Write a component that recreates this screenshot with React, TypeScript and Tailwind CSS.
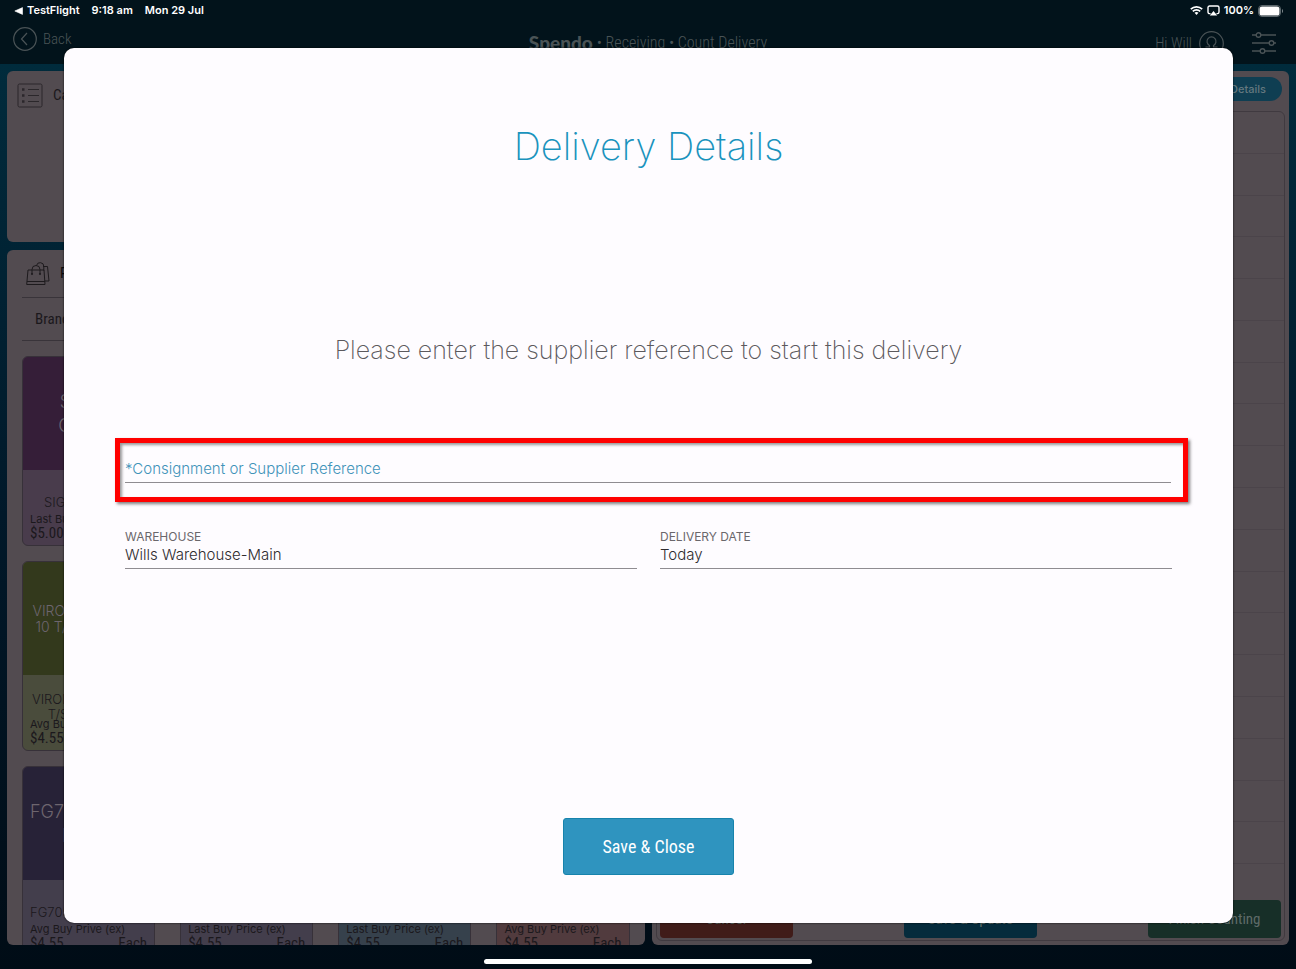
import type { ReactNode } from 'react';

const narrow = "font-['Liberation_Sans_Narrow','Roboto_Condensed','Liberation_Sans',sans-serif]";

type Tile = {
  title: string[];
  titleSize: string;
  name: string[];
  priceLabel: string;
  price: string;
  head: string;
  foot: string;
};

const tiles: Tile[] = [
  { title: ['SIGMA', 'COVER'], titleSize: 'text-lg leading-6', name: ['SIGMA COVER'], priceLabel: 'Last Buy Price (ex)', price: '$5.00', head: 'bg-[#351e38]', foot: 'bg-[#493c4c]' },
  { title: [], titleSize: '', name: [], priceLabel: 'Last Buy Price (ex)', price: '$4.55', head: 'bg-[#2a2338]', foot: 'bg-[#433e4c]' },
  { title: [], titleSize: '', name: [], priceLabel: 'Last Buy Price (ex)', price: '$4.55', head: 'bg-[#1d3442]', foot: 'bg-[#36414c]' },
  { title: [], titleSize: '', name: [], priceLabel: 'Avg Buy Prive (ex)', price: '$4.55', head: 'bg-[#4f2420]', foot: 'bg-[#513b3e]' },
  { title: ['VIRON TESTER S', '10 T/SHEETS XL'], titleSize: 'text-sm leading-4', name: ['VIRON TEST PK 10', 'T/SHEETS XL'], priceLabel: 'Avg Buy Prive (ex)', price: '$4.55', head: 'bg-[#33391c]', foot: 'bg-[#4a4c3c]' },
  { title: [], titleSize: '', name: [], priceLabel: 'Last Buy Price (ex)', price: '$4.55', head: 'bg-[#2a2338]', foot: 'bg-[#433e4c]' },
  { title: [], titleSize: '', name: [], priceLabel: 'Last Buy Price (ex)', price: '$4.55', head: 'bg-[#1d3442]', foot: 'bg-[#36414c]' },
  { title: [], titleSize: '', name: [], priceLabel: 'Avg Buy Prive (ex)', price: '$4.55', head: 'bg-[#4f2420]', foot: 'bg-[#513b3e]' },
  { title: ['FG70517-ABC', 'LINEN'], titleSize: 'text-lg leading-6', name: ['FG70517-AB LINEN'], priceLabel: 'Avg Buy Prive (ex)', price: '$4.55', head: 'bg-[#272237]', foot: 'bg-[#433e4c]' },
  { title: [], titleSize: '', name: [], priceLabel: 'Last Buy Price (ex)', price: '$4.55', head: 'bg-[#2a2338]', foot: 'bg-[#433e4c]' },
  { title: [], titleSize: '', name: [], priceLabel: 'Last Buy Price (ex)', price: '$4.55', head: 'bg-[#1d3442]', foot: 'bg-[#36414c]' },
  { title: [], titleSize: '', name: [], priceLabel: 'Avg Buy Prive (ex)', price: '$4.55', head: 'bg-[#4f2420]', foot: 'bg-[#513b3e]' },
];

const StatusBar = () => (
  <div className="flex h-[22px] items-center justify-between pb-px pl-[14px] pr-3 text-[11px] font-semibold text-white">
    <div className="flex items-center gap-3">
      <a href="#" className="flex items-center gap-1">
        <svg width="9" height="8" viewBox="0 0 9 8" fill="currentColor">
          <path d="M8.5.6v6.8L.8 4z" stroke="currentColor" strokeWidth=".6" strokeLinejoin="round" />
        </svg>
        TestFlight
      </a>
      <span>9:18 am</span>
      <span>Mon 29 Jul</span>
    </div>
    <div className="flex items-center gap-1">
      <svg width="13" height="11" viewBox="0 0 13 11" fill="none" stroke="currentColor" strokeWidth="1.7">
        <path d="M.8 4.1a8.2 8.2 0 0 1 11.4 0" />
        <path d="M2.8 6.3a5.3 5.3 0 0 1 7.4 0" />
        <path d="M4.5 7.8a3 3 0 0 1 4 0L6.5 10z" fill="currentColor" stroke="none" />
      </svg>
      <svg width="13" height="11" viewBox="0 0 13 11" fill="none">
        <path d="M3.5 8.6h-.9A1.6 1.6 0 0 1 1 7V2.6A1.6 1.6 0 0 1 2.6 1h7.8A1.6 1.6 0 0 1 12 2.6V7a1.6 1.6 0 0 1-1.6 1.6h-.9" stroke="currentColor" strokeWidth="1.4" />
        <path d="M6.5 6l3.7 4.500H2.8z" fill="currentColor" />
      </svg>
      <span>100%</span>
      <svg width="26" height="12" viewBox="0 0 26 12">
        <rect x=".5" y=".5" width="22" height="11" rx="3.5" fill="none" stroke="#5b676c" />
        <rect x="1.500" y="1.500" width="20" height="9" rx="2.600" fill="#fff" />
        <path d="M24 4v4c1.4-.6 1.4-3.4 0-4z" fill="#7f898d" />
      </svg>
    </div>
  </div>
);

const AppHeader = () => (
  <header className={`grid h-[42px] grid-cols-[1fr_auto_1fr] items-center px-[13px] text-[15px] font-light text-[#4a5356] ${narrow}`}>
    <button type="button" className="flex items-center gap-[6px] justify-self-start pb-2">
      <svg width="24" height="24" viewBox="0 0 24 24" fill="none" stroke="currentColor" strokeWidth="1.2">
        <circle cx="12" cy="12" r="11.3" />
        <path d="M14 6l-5.5 6 5.5 6" />
      </svg>
      Back
    </button>
    <h1 className="flex items-center gap-1">
      <span className="font-['Lato',sans-serif] text-[19px] font-black">Spendo</span>
      <span className="text-[16px]">• Receiving • Count Delivery</span>
    </h1>
    <div className="flex items-center justify-self-end pr-[7px]">
      <span>Hi Will</span>
      <svg className="ml-[7px]" width="25" height="25" viewBox="0 0 25 25" fill="none" stroke="currentColor" strokeWidth="1.2">
        <circle cx="12.5" cy="12.5" r="11.8" />
        <path d="M6.500 16h4v-1.500a4.500 4.500 0 1 1 4 0V16h4" />
      </svg>
      <button type="button" aria-label="Filters" className="ml-7">
        <svg width="24" height="22" viewBox="0 0 24 22" fill="none" stroke="currentColor" strokeWidth="1.4">
          <path d="M0 3h4M9 3h15M0 11h17M22 11h2M0 19h8M13 19h11" />
          <circle cx="6.5" cy="3" r="2.3" />
          <circle cx="19.5" cy="11" r="2.3" />
          <circle cx="10.5" cy="19" r="2.3" />
        </svg>
      </button>
    </div>
  </header>
);

const ListIcon = () => (
  <svg width="26" height="25" viewBox="0 0 26 25" fill="none" stroke="#2b272b" strokeWidth="1">
    <rect x="1" y="1" width="24" height="23" rx="1.5" />
    <path d="M11 6.500h11M11 12.500h11M11 18.500h11" />
    <path d="M5 6.500h2.500M5 12.500h2.500M5 18.500h2.500" strokeWidth="2.500" />
  </svg>
);

const BagsIcon = () => (
  <svg width="24" height="25" viewBox="0 0 24 25" fill="none" stroke="#1d1a1d" strokeWidth="1">
    <path d="M2 9h16l1 14.500H.7zM1 20.500h18" />
    <path d="M6 13V8.500a4 4 0 0 1 8 0V13" />
    <path d="M10.500 4.500a3.700 3.700 0 0 1 7.300 1v4M17 5.500h4.500L23 20h-4" />
    <circle cx="6" cy="13" r=".7" />
    <circle cx="14" cy="13" r=".7" />
  </svg>
);

const ProductTile = ({ tile }: { tile: Tile }) => (
  <div className={`flex h-[190px] flex-col overflow-hidden rounded-md border border-[#373139] ${tile.foot}`}>
    <div className={`flex h-[113px] shrink-0 flex-col items-center justify-center whitespace-nowrap font-light text-[#6d656e] ${tile.titleSize} ${tile.head}`}>
      {tile.title.map((line) => <span key={line}>{line}</span>)}
    </div>
    <div className="flex grow flex-col justify-end pb-1 text-[#1b181c]">
      <div className="flex h-[22px] flex-col items-center justify-center text-[13px] font-light leading-[15px]">
        {tile.name.map((line) => <span key={line} className="whitespace-nowrap">{line}</span>)}
      </div>
      <div className="px-[7px]">
        <div className="text-[11px] leading-3">{tile.priceLabel}</div>
        <div className={`flex justify-between text-[15px] leading-4 ${narrow}`}>
          <span>{tile.price}</span>
          <span>Each</span>
        </div>
      </div>
    </div>
  </div>
);

const LeftColumn = () => (
  <div className="flex min-h-0 flex-col gap-2">
    <section className="h-[171px] shrink-0 rounded-md bg-[#524b50] px-[10px] py-3">
      <h2 className={`flex items-center gap-[10px] text-[15px] text-[#1b181c] ${narrow}`}>
        <ListIcon />
        Cart
      </h2>
    </section>
    <section className="min-h-0 flex-1 overflow-hidden rounded-md bg-[#524b50] px-[15px]">
      <h2 className={`flex h-12 items-center gap-[10px] border-b border-[#39343a] pl-1 text-[15px] text-[#0c0a0c] ${narrow}`}>
        <BagsIcon />
        Products
      </h2>
      <div className={`flex h-[43px] items-center border-b border-[#39343a] pl-[13px] text-[15px] text-[#1b181c] ${narrow}`}>Brands</div>
      <div className="grid grid-cols-4 gap-x-[25px] gap-y-[15px] pt-[15px]">
        {tiles.map((tile, i) => <ProductTile key={i} tile={tile} />)}
      </div>
    </section>
  </div>
);

const FooterButton = ({ className, children }: { className: string; children: ReactNode }) => (
  <button type="button" className={`h-[38px] w-[133px] rounded text-[15px] text-[#5f6b68] ${narrow} ${className}`}>
    {children}
  </button>
);

const RightColumn = () => (
  <section className="flex min-h-0 flex-col rounded-md bg-[#524b50] px-1 pb-1 pt-[6px]">
    <div className="flex h-[34px] shrink-0 items-start justify-end pr-[3px]">
      <button type="button" className="h-6 rounded-full bg-[#0f3e52] px-4 text-[11px] font-medium text-[#64787f]">Delivery Details</button>
    </div>
    <div className="flex min-h-0 flex-1 flex-col rounded-md border border-[#403a40] px-[3px] pb-[2px]">
      {Array.from({ length: 18 }, (_, i) => (
        <div key={i} className="-mx-[3px] flex-1 border-b border-[#4b444a]" />
      ))}
      <div className="h-9" />
      <div className="flex justify-between">
        <FooterButton className="bg-[#401c19]">Cancel</FooterButton>
        <FooterButton className="bg-[#052b3c]">Save & Update</FooterButton>
        <FooterButton className="bg-[#172f28]">Finish Counting</FooterButton>
      </div>
    </div>
  </section>
);

const Field = ({ id, label, value }: { id: string; label: string; value: string }) => (
  <div className="flex flex-1 flex-col">
    <label htmlFor={id} className="text-xs leading-[18px] text-[#6a676b]">{label}</label>
    <input
      id={id}
      defaultValue={value}
      className="h-[23px] w-full border-b border-[#8f8c91] bg-transparent pb-[5px] text-[15px] font-light text-[#2f2c30] outline-none"
    />
  </div>
);

const DeliveryDialog = () => (
  <form
    role="dialog"
    aria-labelledby="dialog-title"
    onSubmit={(e) => e.preventDefault()}
    className="absolute bottom-[46px] left-16 right-[63px] top-12 flex flex-col rounded-[10px] bg-[#fefcff] shadow-[0_0_2px_#000]"
  >
    <h2 id="dialog-title" className="pt-[66px] text-center text-[38px] font-extralight leading-[64px] text-[#1a93bd]">Delivery Details</h2>
    <p className="pt-[152px] text-center text-[25px] font-extralight leading-10 text-[#5c595d]">
      Please enter the supplier reference to start this delivery
    </p>
    <div className="ml-[51px] mr-[45px] mt-[68px] border-5 border-[#ff0000] pb-[14px] pl-[5px] pr-3 pt-3 shadow-[2px_2px_3px_rgba(0,0,0,0.5),inset_2px_2px_3px_rgba(0,0,0,0.4)]">
      <input
        type="text"
        aria-label="Consignment or Supplier Reference"
        placeholder="*Consignment or Supplier Reference"
        className="block h-7 w-full border-b border-[#8f8c91] bg-transparent text-[15px] font-light outline-none placeholder:text-[#3f93b9] placeholder:opacity-100"
      />
    </div>
    <div className="flex gap-[23px] px-[61px] pt-[26px]">
      <Field id="warehouse" label="WAREHOUSE" value="Wills Warehouse-Main" />
      <Field id="delivery-date" label="DELIVERY DATE" value="Today" />
    </div>
    <button
      type="submit"
      className={`mb-12 mt-auto h-[57px] w-[171px] self-center rounded-[3px] border border-[#1783ac] bg-[#2f94bf] text-[18px] text-white ${narrow}`}
    >
      Save & Close
    </button>
  </form>
);

const App = () => (
  <div className="relative flex h-screen flex-col overflow-hidden bg-[#02131b] font-['Inter',sans-serif]">
    <StatusBar />
    <AppHeader />
    <main className="grid min-h-0 flex-1 grid-cols-2 gap-[7px] bg-linear-to-b from-[#002b3c] via-[#001829] to-[#000c16] px-[7px] pb-6 pt-[7px]">
      <LeftColumn />
      <RightColumn />
    </main>
    <DeliveryDialog />
    <div className="absolute inset-x-0 bottom-[5px] flex justify-center">
      <div className="h-[5px] w-[328px] rounded-full bg-white" />
    </div>
  </div>
);

export default App;
